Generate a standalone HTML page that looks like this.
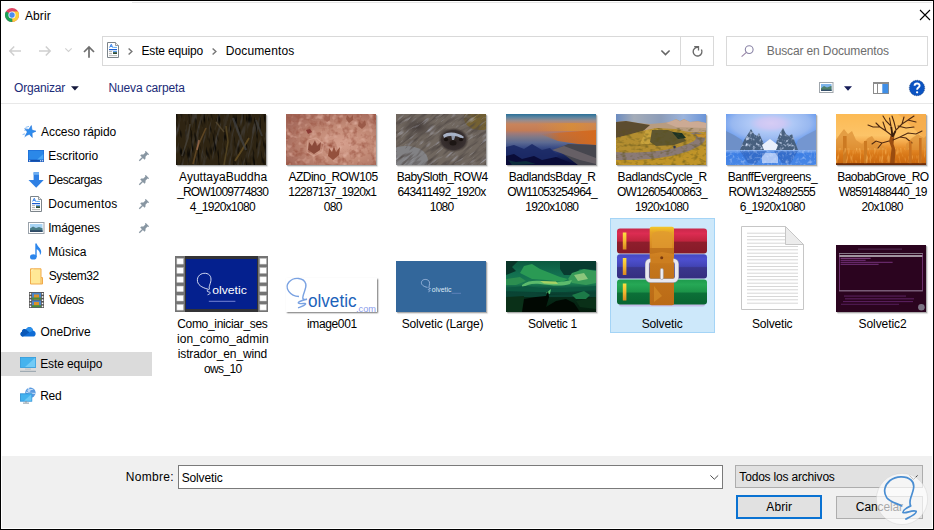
<!DOCTYPE html>
<html>
<head>
<meta charset="utf-8">
<title>Abrir</title>
<style>
*{box-sizing:border-box;margin:0;padding:0}
html,body{width:934px;height:530px;overflow:hidden;background:#fff}
body{font-family:"Liberation Sans",sans-serif;font-size:12px;color:#000;position:relative}
.a{position:absolute}
.t{position:absolute;white-space:nowrap;line-height:15px;font-size:12px}
svg{position:absolute;overflow:visible}
#frame{position:absolute;left:0;top:0;width:934px;height:530px;border:1px solid #000;z-index:50}
.th{position:absolute;width:90px;height:51px;box-shadow:1px 1px 1px rgba(0,0,0,.28),2px 2px 1px rgba(0,0,0,.07);overflow:hidden}
.th svg{left:0;top:0}
</style>
</head>
<body>
<div id="frame"></div>
<div class="a" style="left:132px;top:2px;width:800px;height:1px;background:#e6e6e6"></div>

<!-- chrome icon -->
<svg style="left:5px;top:8px" width="14" height="14" viewBox="-7 -7 14 14">
<circle r="7" fill="#e04663"/>
<path d="M0 0 L-6.06 -3.5 A7 7 0 0 0 0.6 6.97 Z" fill="#1a9f55"/>
<path d="M0 0 L0.6 6.97 A7 7 0 0 0 6.06 -3.5 L0 -3.5 Z" fill="#fbd03a"/>
<path d="M0 0 L-6.06 -3.5 L-3 0 Z" fill="#1a9f55"/>
<circle r="3.6" fill="#f4f4ff"/>
<circle r="2.7" fill="#4a8cf0"/>
</svg>
<!-- close X -->
<svg style="left:920px;top:10px" width="10" height="10" viewBox="0 0 10 10"><path d="M0 0L10 10M10 0L0 10" stroke="#000" stroke-width="1.1" fill="none"/></svg>

<!-- nav arrows -->
<svg style="left:9px;top:46px" width="12" height="10" viewBox="0 0 12 10"><path d="M12 5H1M5.2 0.5L0.8 5L5.2 9.5" stroke="#cfcfcf" stroke-width="1.5" fill="none"/></svg>
<svg style="left:39px;top:46px" width="12" height="10" viewBox="0 0 12 10"><path d="M0 5H11M6.8 0.5L11.2 5L6.8 9.5" stroke="#cfcfcf" stroke-width="1.5" fill="none"/></svg>
<svg style="left:65px;top:48px" width="7" height="4" viewBox="0 0 7 4"><path d="M0.3 0.4L3.5 3.4L6.7 0.4" stroke="#d0d0d0" stroke-width="1.1" fill="none"/></svg>
<svg style="left:83px;top:46px" width="12" height="12" viewBox="0 0 12 12"><path d="M6 11.7V1M1 6L6 0.9L11 6" stroke="#6e6e6e" stroke-width="1.7" fill="none"/></svg>

<!-- address bar -->
<div class="a" style="left:102px;top:36px;width:612px;height:30px;border:1px solid #d9d9d9"></div>
<div class="a" style="left:680px;top:36px;width:1px;height:30px;background:#d9d9d9"></div>
<!-- doc icon in address -->
<svg style="left:107px;top:42px" width="12" height="16" viewBox="0 0 12 16">
<path d="M0.5 0.5H8.5L11.5 3.5V15.5H0.5Z" fill="#fff" stroke="#7c848a" stroke-width="1"/>
<path d="M8.5 0.5V3.5H11.5" fill="#eee" stroke="#7c848a" stroke-width="0.8"/>
<path d="M2.6 5.6L4.3 2.2L5.6 5.6M3.2 4.4H5.2" stroke="#2a7ae8" stroke-width="0.9" fill="none"/>
<rect x="6.2" y="4.9" width="3.8" height="0.9" fill="#4aa4f0"/>
<rect x="2" y="7" width="8" height="1.2" fill="#1a5cd0"/>
<rect x="2" y="9.3" width="3" height="0.8" fill="#9a9a9a"/>
<rect x="6" y="9" width="4" height="1.2" fill="#5aa0f0"/>
<rect x="6" y="10.2" width="4" height="1.8" fill="#2c4c34"/>
<rect x="2" y="11.3" width="3" height="0.8" fill="#9a9a9a"/>
<rect x="2" y="13.3" width="8" height="0.8" fill="#a4a4a4"/>
</svg>
<svg style="left:128px;top:48px" width="5" height="7" viewBox="0 0 5 7"><path d="M0.6 0.4L3.9 3.5L0.6 6.6" stroke="#767676" stroke-width="1.4" fill="none"/></svg>
<svg style="left:212px;top:48px" width="5" height="7" viewBox="0 0 5 7"><path d="M0.6 0.4L3.9 3.5L0.6 6.6" stroke="#767676" stroke-width="1.4" fill="none"/></svg>
<svg style="left:660.5px;top:49.7px" width="9" height="5.5" viewBox="0 0 9 5.5"><path d="M0.4 0.5L4.5 4.6L8.6 0.5" stroke="#666" stroke-width="1.6" fill="none"/></svg>
<!-- refresh -->
<svg style="left:692px;top:46px" width="11.5" height="11" viewBox="0 0 11.5 11"><path d="M9.4 3.5A4.4 4.4 0 1 1 6.2 1.3" stroke="#6a6a6a" stroke-width="1.4" fill="none"/><path d="M2.2 0.6H6.5V4.4" stroke="#6a6a6a" stroke-width="1.3" fill="none"/></svg>

<!-- search -->
<div class="a" style="left:726px;top:36px;width:202px;height:30px;border:1px solid #d9d9d9"></div>
<svg style="left:740.5px;top:45px" width="13" height="12" viewBox="0 0 13 12"><circle cx="8.2" cy="4.6" r="3.9" stroke="#8a84a6" stroke-width="1.1" fill="none"/><path d="M5.4 7.4L0.6 11.6" stroke="#9a86a8" stroke-width="1.2"/></svg>

<!-- toolbar -->
<svg style="left:71px;top:86px" width="8" height="5" viewBox="0 0 8 5"><path d="M0 0.3H7.8L3.9 4.6Z" fill="#14183c"/></svg>
<div class="a" style="left:1px;top:103px;width:932px;height:1px;background:#e8e8e8"></div>
<!-- view icon -->
<svg style="left:818.5px;top:82px" width="14.5" height="11" viewBox="0 0 14.5 11">
<rect x="0.5" y="0.5" width="13.5" height="10" fill="#fff" stroke="#a0a6ac"/>
<rect x="2" y="2" width="10.5" height="7" fill="#7db4ea"/>
<path d="M2 6.2L5 4L8 5.5L12.5 3.8V9H2Z" fill="#4e7f6a"/>
<rect x="2" y="7.6" width="10.5" height="1.4" fill="#35506a"/>
</svg>
<svg style="left:843.5px;top:85.6px" width="8" height="5" viewBox="0 0 8 5"><path d="M0 0.2H8L4 4.8Z" fill="#161c58"/></svg>
<!-- pane icon -->
<svg style="left:873px;top:82px" width="16" height="12" viewBox="0 0 16 12">
<rect x="0.5" y="0.5" width="15" height="11" fill="#fff" stroke="#8c8c8c"/>
<rect x="0" y="0" width="16" height="2" fill="#8c8c8c"/>
<rect x="4" y="2" width="1" height="9.5" fill="#8c8c8c"/>
<rect x="9.3" y="2" width="5.9" height="9.2" fill="#3f8ee6"/>
</svg>
<!-- help -->
<svg style="left:909px;top:79.5px" width="16" height="16" viewBox="-8 -8 16 16"><circle r="7.7" fill="#0b53c2" stroke="#08306e" stroke-width="0.6" stroke-dasharray="1.2 0.8"/><path d="M-2.4 -2.2C-2.4 -5.2 2.6 -5.2 2.6 -2.3C2.6 -0.4 0.1 -0.4 0.1 1.7" stroke="#fff" stroke-width="1.9" fill="none"/><circle cx="0.1" cy="4.3" r="1.15" fill="#fff"/></svg>

<!-- sidebar -->
<div class="a" style="left:1px;top:352px;width:151px;height:24px;background:#dbdbdb"></div>
<!-- star -->
<svg style="left:22px;top:125px" width="14" height="13" viewBox="0 0 14 13">
<g transform="translate(-0.7 0.2) rotate(13 8.6 6.6)"><path d="M8.6 0.2L10.2 4.4L14.4 4.6L11 7.3L12.2 11.6L8.6 9.2L4.9 11.7L6.1 7.3L2.8 4.7L7 4.5Z" fill="#2d8cee" stroke="#1c6fd6" stroke-width="0.5"/></g>
<path d="M3.6 2.4L7 1.4M2.4 5.4L4.6 4.8M0.6 9.6L3 8.8M2.4 12L4.4 11" stroke="#7ab4f2" stroke-width="0.9" fill="none"/>
</svg>
<!-- desktop -->
<svg style="left:28px;top:150px" width="16" height="12" viewBox="0 0 16 12">
<rect x="0" y="0" width="16" height="12" fill="#1c6cd6"/>
<rect x="0.7" y="0.7" width="14.6" height="9" fill="#2b88e8"/>
<path d="M15.3 4V9.7H9Z" fill="#4ca8f4"/>
<rect x="0" y="9.7" width="16" height="2.3" fill="#1a5cc0"/>
<rect x="1" y="10.3" width="1.2" height="1" fill="#fff"/><rect x="12" y="10.3" width="1.2" height="1" fill="#fff"/><rect x="14" y="10.3" width="1.2" height="1" fill="#fff"/>
<rect x="2.6" y="10.5" width="9" height="0.6" fill="#0c3c8a"/>
</svg>
<!-- download -->
<svg style="left:28px;top:172px" width="16" height="16" viewBox="0 0 16 16">
<path d="M5.6 0.3H11V8H15.7L8.2 15.8L0.5 8H5.6Z" fill="#2f80e4"/>
<rect x="5.6" y="0.3" width="5.4" height="2.5" fill="#6fb0f2"/>
</svg>
<!-- documents -->
<svg style="left:30px;top:196px" width="12" height="16" viewBox="0 0 12 16">
<path d="M0.5 0.5H8.5L11.5 3.5V15.5H0.5Z" fill="#fff" stroke="#7c848a" stroke-width="1"/>
<path d="M8.5 0.5V3.5H11.5" fill="#eee" stroke="#7c848a" stroke-width="0.8"/>
<path d="M2.6 5.6L4.3 2.2L5.6 5.6M3.2 4.4H5.2" stroke="#2a7ae8" stroke-width="0.9" fill="none"/>
<rect x="6.2" y="4.9" width="3.8" height="0.9" fill="#4aa4f0"/>
<rect x="2" y="7" width="8" height="1.2" fill="#1a5cd0"/>
<rect x="2" y="9.3" width="3" height="0.8" fill="#9a9a9a"/>
<rect x="6" y="9" width="4" height="1.2" fill="#5aa0f0"/>
<rect x="6" y="10.2" width="4" height="1.8" fill="#2c4c34"/>
<rect x="2" y="11.3" width="3" height="0.8" fill="#9a9a9a"/>
<rect x="2" y="13.3" width="8" height="0.8" fill="#a4a4a4"/>
</svg>
<!-- images -->
<svg style="left:28px;top:222px" width="16.5" height="12" viewBox="0 0 16.5 12">
<rect x="0.5" y="0.5" width="15.5" height="11" fill="#fff" stroke="#9aa2aa"/>
<rect x="2" y="2" width="12.5" height="8" fill="#a8d4f4"/>
<path d="M2 6.5L5 4.6L8 6L11 5L14.5 6.2V10H2Z" fill="#4a7d86"/>
<rect x="2" y="8.2" width="12.5" height="1.8" fill="#2f4a66"/>
</svg>
<!-- music -->
<svg style="left:30px;top:243px" width="12" height="17" viewBox="0 0 12 17">
<ellipse cx="3.3" cy="13.9" rx="3.3" ry="2.7" fill="#2c86ec"/>
<path d="M5.3 0.4H6.7C7.2 3.4 11.2 5 11.2 8.8C11.2 10.4 10.6 11.4 9.8 12.2C10.4 9.4 9 7.4 6.7 6.2V14H5.3Z" fill="#2c86ec"/>
</svg>
<!-- folder -->
<svg style="left:29.7px;top:267.5px" width="13" height="16.5" viewBox="0 0 13 16.5">
<path d="M0.5 0.8H11V9.6H12.5V16H0.5Z" fill="#ffe896" stroke="#f0aa4c" stroke-width="1"/>
<path d="M11 9.6V16" stroke="#f0aa4c" stroke-width="0.9"/>
<path d="M0.9 3.2L3.4 1.2" stroke="#fff4c8" stroke-width="0.8"/>
</svg>
<!-- videos -->
<svg style="left:28.5px;top:292px" width="15" height="16" viewBox="0 0 15 16">
<rect x="0" y="0" width="15" height="16" fill="#555"/>
<rect x="3" y="0.8" width="9" height="6.7" fill="#4a84c8"/>
<rect x="3" y="8.5" width="9" height="6.7" fill="#4a84c8"/>
<rect x="5" y="2.5" width="5" height="5" fill="#d8902a"/>
<rect x="3" y="5.5" width="9" height="2" fill="#4a8a3a"/>
<rect x="5" y="10" width="5" height="5" fill="#d8902a"/>
<rect x="3" y="13.2" width="9" height="2" fill="#4a8a3a"/>
<g fill="#fff"><rect x="0.7" y="1" width="1.5" height="1.6"/><rect x="0.7" y="4.2" width="1.5" height="1.6"/><rect x="0.7" y="7.4" width="1.5" height="1.6"/><rect x="0.7" y="10.6" width="1.5" height="1.6"/><rect x="0.7" y="13.6" width="1.5" height="1.6"/>
<rect x="12.8" y="1" width="1.5" height="1.6"/><rect x="12.8" y="4.2" width="1.5" height="1.6"/><rect x="12.8" y="7.4" width="1.5" height="1.6"/><rect x="12.8" y="10.6" width="1.5" height="1.6"/><rect x="12.8" y="13.6" width="1.5" height="1.6"/></g>
</svg>
<!-- onedrive -->
<svg style="left:20px;top:326px" width="16" height="11" viewBox="0 0 16 11">
<path d="M3.2 10.6C0.6 10.6 -0.6 7.2 2 5.8C1.8 3.4 4.6 2.2 6 3.6C7.4 -0.4 12.6 0.4 13 4.4C16.6 4.8 16.6 10.6 13 10.6Z" fill="#0f6cd6"/>
<path d="M6 3.6C7.4 -0.4 12.6 0.4 13 4.4L7 8Z" fill="#2a8fea"/>
<path d="M2 5.8C1.8 3.4 4.6 2.2 6 3.6L9.6 6.4L3 10.6C0.6 10.6 -0.6 7.2 2 5.8Z" fill="#0a58b8"/>
</svg>
<!-- this pc -->
<svg style="left:20px;top:357px" width="16" height="15" viewBox="0 0 16 15">
<rect x="0.4" y="0.4" width="15.2" height="10" fill="#45b3ee" stroke="#2e9adc" stroke-width="0.8"/>
<path d="M15.2 0.8V10H5Z" fill="#72cbf6"/>
<rect x="5" y="11.6" width="6" height="1" fill="#b8bec4"/>
<rect x="0" y="13.8" width="16" height="1.1" fill="#9aa6ae"/>
</svg>
<!-- network -->
<svg style="left:20px;top:387px" width="16" height="17" viewBox="0 0 16 17">
<circle cx="10.4" cy="5.6" r="5.2" fill="#5a9ae0"/>
<path d="M8 1.2C10 3 12 3 13.5 1.8M6 5C9 7 12 6 15.4 6.4" stroke="#cfe4fa" stroke-width="1" fill="none"/>
<circle cx="9" cy="3.6" r="1.6" fill="#bcd8f6"/>
<rect x="0.4" y="6.8" width="11.4" height="7.4" fill="#43b2ee" stroke="#2a8ed4" stroke-width="0.8"/>
<path d="M11.4 7.2V13.8H4Z" fill="#6cc8f6"/>
<rect x="5.3" y="14.2" width="1.4" height="1.4" fill="#8a98a4"/>
<rect x="3" y="15.6" width="6" height="1" fill="#8a98a4"/>
</svg>
<!-- pins -->
<svg style="left:139px;top:151px" width="10" height="10" viewBox="0 0 10 10"><use href="#pin"/></svg>
<svg width="0" height="0" style="left:0;top:0"><defs><g id="pin"><path d="M0.3 9.7L3.8 6.2" stroke="#8896a2" stroke-width="1.3"/><path d="M1.2 4.4L2.2 3.6L4.4 3.4L6.4 1.4L6 0.4L6.8 0L10 3.2L9.6 4L8.6 3.6L6.6 5.6L6.4 7.8L5.6 8.8Z" fill="#8896a2"/></g></defs></svg>
<svg style="left:139px;top:175px" width="10" height="10" viewBox="0 0 10 10"><use href="#pin"/></svg>
<svg style="left:139px;top:199px" width="10" height="10" viewBox="0 0 10 10"><use href="#pin"/></svg>
<svg style="left:139px;top:223px" width="10" height="10" viewBox="0 0 10 10"><use href="#pin"/></svg>

<!-- row 1 thumbnails -->
<div class="th" style="left:176px;top:114px;background:#2e2412">
<svg width="90" height="51" viewBox="0 0 90 51">
<defs><filter id="n1" color-interpolation-filters="sRGB" x="0" y="0" width="100%" height="100%"><feTurbulence type="fractalNoise" baseFrequency="0.35 0.05" numOctaves="2" seed="3"/><feColorMatrix values="0 0 0 0 0.27  0 0 0 0 0.26  0 0 0 0 0.25  0 0 0 3 -1.55"/></filter>
<filter id="n1b" color-interpolation-filters="sRGB" x="0" y="0" width="100%" height="100%"><feTurbulence type="fractalNoise" baseFrequency="0.4 0.07" numOctaves="2" seed="11"/><feColorMatrix values="0 0 0 0 0  0 0 0 0 0  0 0 0 0 0  0 0 0 3.4 -1.85"/></filter></defs>
<rect width="90" height="51" fill="#2e2412"/>
<g transform="rotate(12 45 25)"><rect x="-20" y="-20" width="130" height="91" filter="url(#n1)"/></g>
<g transform="rotate(-6 45 25)"><rect x="-20" y="-20" width="130" height="91" filter="url(#n1b)"/></g>
<path d="M17 50L21 34L30 14" stroke="#6e5028" stroke-width="1.6" fill="none" opacity=".75"/>
<path d="M21 36L23 26" stroke="#a87458" stroke-width="1.6" fill="none" opacity=".7"/>
<path d="M59 47L66 36L73 24" stroke="#6a5226" stroke-width="1.8" fill="none" opacity=".8"/>
<path d="M48 51L52 28L50 12" stroke="#5a4a26" stroke-width="1.6" fill="none" opacity=".8"/>
<path d="M40 8L48 18" stroke="#5e5034" stroke-width="1.4" fill="none" opacity=".7"/>
<path d="M57 4L63 20L70 36" stroke="#444444" stroke-width="2.2" fill="none" opacity=".75"/>
<path d="M80 6L86 22" stroke="#404040" stroke-width="2" fill="none" opacity=".7"/>
<path d="M6 42L12 24L14 10" stroke="#4a463e" stroke-width="1.6" fill="none" opacity=".7"/>
</svg></div>

<div class="th" style="left:286px;top:114px;background:#b67c68">
<svg width="90" height="51" viewBox="0 0 90 51">
<defs><radialGradient id="g2" cx="0.62" cy="0.58" r="0.7"><stop offset="0" stop-color="#d6a08e"/><stop offset="0.5" stop-color="#c28a76"/><stop offset="1" stop-color="#a4685a"/></radialGradient>
<filter id="n2" color-interpolation-filters="sRGB" x="0" y="0" width="100%" height="100%"><feTurbulence type="fractalNoise" baseFrequency="0.14" numOctaves="3" seed="8"/><feColorMatrix values="0 0 0 0 0.6  0 0 0 0 0.32  0 0 0 0 0.25  0 0 0 2.2 -1.05"/></filter>
<filter id="n2b" color-interpolation-filters="sRGB" x="0" y="0" width="100%" height="100%"><feTurbulence type="fractalNoise" baseFrequency="0.16" numOctaves="2" seed="21"/><feColorMatrix values="0 0 0 0 0.9  0 0 0 0 0.72  0 0 0 0 0.66  0 0 0 2.2 -1.2"/></filter></defs>
<rect width="90" height="51" fill="url(#g2)"/>
<rect width="90" height="51" filter="url(#n2)"/>
<rect width="90" height="51" filter="url(#n2b)"/>
<path d="M22 36L23 28L26 32L29 26L31 32L35 28L34 36L28 40Z" fill="#8a4a3a"/>
<path d="M22 26L30 24L38 30L36 38L28 42L21 38Z" fill="none" stroke="#e0b0a0" stroke-width="1.2" opacity=".5"/>
<path d="M42 42L43 34L46 38L48 32L50 38L54 33L53 41L47 46Z" fill="#94503c"/>
<path d="M72 12L73 7L76 10L79 6L80 11L76 15Z" fill="#9a5a48"/>
<path d="M60 5L61 1L64 4L67 1L67 6L63 9Z" fill="#9a5a48"/>
<path d="M38 5L39 1L42 3L44 1L44 6L41 8Z" fill="#a46454"/>
<path d="M20 16L24 15L26 18L22 20Z" fill="#8a3a34"/>
</svg></div>

<div class="th" style="left:396px;top:114px;background:#70675f">
<svg width="90" height="51" viewBox="0 0 90 51">
<defs><filter id="n3" color-interpolation-filters="sRGB" x="0" y="0" width="100%" height="100%"><feTurbulence type="fractalNoise" baseFrequency="0.07 0.35" numOctaves="2" seed="5"/><feColorMatrix values="0 0 0 0 0.3  0 0 0 0 0.27  0 0 0 0 0.26  0 0 0 2.4 -1.1"/></filter>
<filter id="n3b" color-interpolation-filters="sRGB" x="0" y="0" width="100%" height="100%"><feTurbulence type="fractalNoise" baseFrequency="0.08 0.4" numOctaves="2" seed="9"/><feColorMatrix values="0 0 0 0 0.66  0 0 0 0 0.66  0 0 0 0 0.7  0 0 0 2.4 -1.35"/></filter>
<radialGradient id="g3" cx="0.5" cy="0.5" r="0.5"><stop offset="0" stop-color="#2a2220"/><stop offset="0.8" stop-color="#383030"/><stop offset="1" stop-color="#4a423c" stop-opacity="0.2"/></radialGradient>
<radialGradient id="g3b" cx="0.5" cy="0.5" r="0.5"><stop offset="0" stop-color="#3e3634" stop-opacity=".9"/><stop offset="1" stop-color="#4a4240" stop-opacity="0"/></radialGradient></defs>
<rect width="90" height="51" fill="#70675f"/>
<ellipse cx="84" cy="4" rx="16" ry="12" fill="#74602e" opacity=".9"/>
<ellipse cx="10" cy="46" rx="22" ry="14" fill="#8e949e" opacity=".6"/>
<ellipse cx="22" cy="13" rx="18" ry="11" fill="url(#g3b)"/>
<g transform="rotate(-38 45 25)"><rect x="-20" y="-30" width="130" height="110" filter="url(#n3)"/><rect x="-20" y="-30" width="130" height="110" filter="url(#n3b)"/></g>
<ellipse cx="57.5" cy="26" rx="15" ry="12" fill="url(#g3)"/>
<path d="M47 21C52 17 62 18 68 23L66 25C61 21 53 21 48 24Z" fill="#b4c0d6" opacity=".9"/>
<path d="M55 20L60 20L58 26L56 26Z" fill="#a8b4cc" opacity=".8"/>
<ellipse cx="57" cy="29" rx="3.5" ry="2.5" fill="#1c1614"/>
<ellipse cx="50" cy="25.5" rx="2.2" ry="1.8" fill="#181210"/><ellipse cx="65" cy="25.5" rx="2.2" ry="1.8" fill="#181210"/>
</svg></div>

<div class="th" style="left:506px;top:114px;background:#5a5a78">
<svg width="90" height="51" viewBox="0 0 90 51">
<defs><linearGradient id="g4" x1="0" y1="0" x2="0" y2="1">
<stop offset="0" stop-color="#2a7098"/><stop offset="0.06" stop-color="#5a84a0"/><stop offset="0.13" stop-color="#9a8c8c"/><stop offset="0.2" stop-color="#c8845c"/><stop offset="0.32" stop-color="#c47c54"/><stop offset="0.38" stop-color="#a07a78"/><stop offset="0.46" stop-color="#7c7888"/><stop offset="0.56" stop-color="#5c6a92"/><stop offset="0.66" stop-color="#3a4c86"/><stop offset="0.78" stop-color="#1e2c68"/><stop offset="0.9" stop-color="#101848"/><stop offset="1" stop-color="#0a0c34"/></linearGradient>
<linearGradient id="g4b" x1="0" y1="0" x2="1" y2="0"><stop offset="0" stop-color="#d46a1e" stop-opacity="0"/><stop offset="0.35" stop-color="#d46a1e" stop-opacity=".75"/><stop offset="1" stop-color="#d46a1e" stop-opacity="1"/></linearGradient>
<linearGradient id="g4c" x1="0" y1="0" x2="1" y2="0"><stop offset="0" stop-color="#dc9030" stop-opacity="0"/><stop offset="0.6" stop-color="#dc9030" stop-opacity=".7"/><stop offset="1" stop-color="#d88a40" stop-opacity=".5"/></linearGradient></defs>
<rect width="90" height="51" fill="url(#g4)"/>
<rect x="30" y="9" width="60" height="8" fill="url(#g4c)"/>
<path d="M34 20L90 16V31L72 30L52 27Z" fill="url(#g4b)"/>
<path d="M50 35L62 30L90 31V51H72L60 42Z" fill="#46464e"/>
<path d="M46 36L58 32L90 44V50L74 46Z" fill="#6c646a" opacity=".85"/>
<path d="M0 33L8 31L18 35L26 30L36 36L44 34L52 42L44 51H0Z" fill="#1c2a66" opacity=".9"/>
<path d="M0 42L8 40L16 45L28 42L36 46L50 43L60 47L70 51H0Z" fill="#0a0c38"/>
<path d="M2 46L10 48L20 47L30 50L6 51Z" fill="#0c2c3c"/>
</svg></div>

<div class="th" style="left:616px;top:114px;background:#a08c50">
<svg width="90" height="51" viewBox="0 0 90 51">
<defs><linearGradient id="g5" x1="0" y1="0" x2="1" y2="0"><stop offset="0" stop-color="#6c8cc0"/><stop offset="0.2" stop-color="#a4acb8"/><stop offset="0.5" stop-color="#8c9cb8"/><stop offset="0.75" stop-color="#9cb4dc"/><stop offset="1" stop-color="#6a94d8"/></linearGradient>
<filter id="n5" color-interpolation-filters="sRGB" x="0" y="0" width="100%" height="100%"><feTurbulence type="fractalNoise" baseFrequency="0.18 0.3" numOctaves="2" seed="4"/><feColorMatrix values="0 0 0 0 0.36  0 0 0 0 0.32  0 0 0 0 0.1  0 0 0 2.2 -1.05"/></filter></defs>
<rect width="90" height="51" fill="#b8922e"/>
<rect width="90" height="11" fill="url(#g5)"/>
<path d="M0 8L10 7L22 9L34 10L46 9L54 8L60 5L64 7L68 5L74 8L82 7L90 9V18H0Z" fill="#b89c80"/>
<path d="M50 9L60 5.5L64 7.5L68 5.5L74 8L82 7.5L90 9V14L60 13Z" fill="#ccaa94"/>
<path d="M0 8L10 7L22 9L34 11L26 18L0 24Z" fill="#5c4c30"/>
<path d="M0 24L26 17L40 14L60 15L76 19L80 24L60 34L30 38L0 38Z" fill="#b48e30"/>
<path d="M24 30L30 16L42 15L40 30Z" fill="#c8a23c"/>
<path d="M36 16L52 16L66 21L70 27L58 31L40 32L34 28Z" fill="#5e5630"/>
<path d="M56 18L66 19L70 24L62 25Z" fill="#1c3224"/>
<path d="M0 38C30 40 62 36 78 27C82 24 80 21 74 19L80 18C90 20 92 24 86 30C70 42 34 47 0 46Z" fill="#8a7a76"/>
<path d="M78 20L90 20V24L82 23Z" fill="#c8902c"/>
<path d="M0 46C34 47 64 44 90 32V51H0Z" fill="#c09428"/>
<rect y="14" width="90" height="37" filter="url(#n5)" opacity=".8"/>
<circle cx="58.5" cy="33" r="1.2" fill="#2a3458"/>
</svg></div>

<div class="th" style="left:726px;top:114px;background:#7aa8ec">
<svg width="90" height="51" viewBox="0 0 90 51">
<defs><radialGradient id="g6" cx="0.5" cy="0.25" r="0.62"><stop offset="0" stop-color="#d6ccf4"/><stop offset="0.22" stop-color="#ccc8f4"/><stop offset="0.4" stop-color="#aec8f6"/><stop offset="0.7" stop-color="#98b8f0"/><stop offset="1" stop-color="#5690ee"/></radialGradient>
<linearGradient id="g6b" x1="0" y1="0" x2="0" y2="1"><stop offset="0" stop-color="#8ab2f0"/><stop offset="0.25" stop-color="#3c7ee4"/><stop offset="1" stop-color="#4a88e6"/></linearGradient>
<filter id="n6" color-interpolation-filters="sRGB" x="0" y="0" width="100%" height="100%"><feTurbulence type="fractalNoise" baseFrequency="0.3" numOctaves="2" seed="7"/><feColorMatrix values="0 0 0 0 0.85  0 0 0 0 0.9  0 0 0 0 1  0 0 0 2.6 -1.3"/></filter>
<clipPath id="c6"><path d="M14 36L18 26L22 20L25 15L28 20L31 22L33 19L37 28L41 36ZM48 36L51 26L54 19L57 14L60 20L63 22L66 20L69 28L72 36Z"/></clipPath></defs>
<rect width="90" height="37" fill="url(#g6)"/>
<path d="M0 17L8 21L16 26L20 37H0Z" fill="#6e90c8"/>
<path d="M90 16L80 21L72 26L68 37H90Z" fill="#7496d0"/>
<path d="M14 36L18 26L22 20L25 15L28 20L31 22L33 19L37 28L41 36Z" fill="#48607e"/>
<path d="M48 36L51 26L54 19L57 14L60 20L63 22L66 20L69 28L72 36Z" fill="#48607e"/>
<g clip-path="url(#c6)"><rect width="90" height="51" filter="url(#n6)"/></g>
<path d="M36 31L44 25L52 31L50 36H38Z" fill="#eaf0fc"/>
<rect y="36" width="90" height="15" fill="url(#g6b)"/>
<rect x="36" y="39" width="16" height="10" fill="#c0d2f8" opacity=".85"/>
<path d="M14 37L22 49L30 50L41 37Z" fill="#2c5cb4" opacity=".55"/><path d="M48 37L56 49L64 50L72 37Z" fill="#2c5cb4" opacity=".55"/>
<rect y="36" width="90" height="15" filter="url(#n6)" opacity=".5"/>
</svg></div>

<div class="th" style="left:836px;top:114px;background:#e8a040">
<svg width="90" height="51" viewBox="0 0 90 51">
<defs><linearGradient id="g7" x1="0" y1="0" x2="0" y2="1"><stop offset="0" stop-color="#fcba54"/><stop offset="0.42" stop-color="#fcc468"/><stop offset="0.55" stop-color="#f4aa4c"/><stop offset="0.68" stop-color="#e48a28"/><stop offset="0.8" stop-color="#d87818"/><stop offset="0.95" stop-color="#cc6a10"/><stop offset="1" stop-color="#7a3408"/></linearGradient>
<filter id="n7" color-interpolation-filters="sRGB" x="0" y="0" width="100%" height="100%"><feTurbulence type="fractalNoise" baseFrequency="0.5 0.12" numOctaves="2" seed="2"/><feColorMatrix values="0 0 0 0 0.98  0 0 0 0 0.72  0 0 0 0 0.36  0 0 0 2.6 -1.3"/></filter></defs>
<rect width="90" height="51" fill="url(#g7)"/>
<path d="M62 0L90 0V26Z" fill="#f4a84a" opacity=".75"/>
<path d="M0 26L4 20L8 15L12 20L16 17L20 26L26 30L32 24L36 22L40 28L48 32L50 36L0 36Z" fill="#dc9238" opacity=".75"/>
<path d="M70 30L76 24L82 20L88 24L90 22V36H70Z" fill="#dc9238" opacity=".7"/>
<rect x="7" y="22" width="3.6" height="28" fill="#cc7a22"/><rect x="28" y="27" width="3" height="23" fill="#cc7a22"/>
<rect y="34" width="90" height="15" filter="url(#n7)" opacity=".75"/>
<path d="M54 50L55.5 34L53 27L55 20L57 24L58.5 20L57.5 30L59.5 36L58.5 50Z" fill="#9a4c10"/>
<path d="M56.5 22L55 12L53.5 4M56.5 22L60 16L66 10M60 16L58 8L56 2M56.5 22L50 17L44 13L40 9M50 17L47 8M44 13L37 13L32 11M55 12L50 7L47 2M57 26L64 23L70 24L76 29M66 10L72 6L80 8M66 10L68 3M72 6L78 2M53 27L46 29L40 27L36 30M46 29L42 34M64 23L72 19L80 20L86 17M62 12L70 14L78 13" stroke="#4e2810" stroke-width="1.1" fill="none" stroke-linecap="round"/>
<path d="M56.5 23L55.3 13M56.5 23L59.5 17" stroke="#3a1e0c" stroke-width="1.8" fill="none"/>
<rect x="73" y="27" width="2.6" height="23" fill="#c87220"/><rect x="83" y="24" width="2.6" height="26" fill="#c87220"/>
<rect y="49.3" width="90" height="1.7" fill="#6a2c08"/>
</svg></div>

<!-- row 2 -->
<!-- selection -->
<div class="a" style="left:610px;top:218px;width:105px;height:115px;background:#cde8fa;border:1px solid #a4d4f6"></div>

<!-- video thumb -->
<svg style="left:175px;top:256px" width="93" height="56" viewBox="0 0 93 56">
<rect width="93" height="56" fill="#747474"/>
<rect x="10" y="0" width="73" height="56" fill="#333336"/>
<rect x="11" y="3" width="71" height="50" fill="#04208e"/>
<g fill="#fff" stroke="#c8c8c8" stroke-width="0.5"><rect x="1.9" y="2.5" width="6.4" height="5.6"/><rect x="1.9" y="11.7" width="6.4" height="5.6"/><rect x="1.9" y="20.8" width="6.4" height="5.6"/><rect x="1.9" y="30.1" width="6.4" height="5.6"/><rect x="1.9" y="39.4" width="6.4" height="5.6"/><rect x="1.9" y="48.5" width="6.4" height="5.6"/><rect x="84.9" y="2.5" width="6.4" height="5.6"/><rect x="84.9" y="11.7" width="6.4" height="5.6"/><rect x="84.9" y="20.8" width="6.4" height="5.6"/><rect x="84.9" y="30.1" width="6.4" height="5.6"/><rect x="84.9" y="39.4" width="6.4" height="5.6"/><rect x="84.9" y="48.5" width="6.4" height="5.6"/></g>
<path d="M33 33.2C27 31.5 22 29 22.4 23.5C22.8 18.5 28 16.4 32 17.6C36.4 19 36.6 23.5 35.2 27.5C34.4 30 33.8 31.6 34.4 33.2C32 34 31.4 35.4 33.2 35.8C36 36.2 36.4 37.4 32.6 38.8" stroke="#e8ecfa" stroke-width="0.9" fill="none"/>
<text x="37.2" y="37.7" font-family="Liberation Sans, sans-serif" font-size="10.2" fill="#fff" textLength="34.6" lengthAdjust="spacingAndGlyphs">olvetic</text>
<rect x="33.8" y="44.8" width="26.6" height="1" fill="#7482d4"/>
</svg>

<!-- image001 -->
<div class="a" style="left:286px;top:278px;width:90.5px;height:34px;background:#fff;box-shadow:1px 1px 1.5px rgba(0,0,0,.55)"></div>
<svg style="left:286px;top:278px" width="91" height="34" viewBox="0 0 91 34">
<path d="M13 18.5C4 18 -2 10 3 4C8 -1.5 18 -0.5 19.8 6C20.8 10 17.5 14 16.8 19.5C16.6 21 17.5 21.8 21 21.3C15 22.5 10.5 24.6 13 25.4C16 26.2 20.5 24.5 19.5 26.2C18.5 28 15 28.8 12 29.8" stroke="#7aa2e2" stroke-width="1.4" fill="none"/>
<text x="22" y="28.7" font-family="Liberation Sans, sans-serif" font-size="17.5" fill="#1c62ba" textLength="48.5" lengthAdjust="spacingAndGlyphs">olvetic</text>
<text x="70" y="33.6" font-family="Liberation Sans, sans-serif" font-size="9" fill="#8a9cec" textLength="20" lengthAdjust="spacingAndGlyphs">.com</text>
</svg>

<!-- Solvetic (Large) -->
<div class="th" style="left:396px;top:261px;background:#33679b">
<svg width="90" height="51" viewBox="0 0 90 51">
<path d="M31.5 26.4C27.5 25.6 24.6 23.6 25.6 20.6C26.6 18 30.6 17.8 32.6 19.6C34.2 21.2 33.4 23.6 33 26C32.8 27.2 33.4 27.6 34.6 27.6C32.2 28 31.6 28.8 33 29C34.6 29.2 34.4 30.2 32.4 30.8" stroke="#a8c0e4" stroke-width="0.8" fill="none"/>
<text x="35.8" y="30.6" font-family="Liberation Sans, sans-serif" font-size="7.2" fill="#dfe8f6" textLength="19.6" lengthAdjust="spacingAndGlyphs">olvetic</text>
<rect x="55.6" y="31.8" width="9.4" height="1" fill="#5c80b8"/>
</svg></div>

<!-- Solvetic 1 aurora -->
<div class="th" style="left:506px;top:261px;background:#0c3a1c">
<svg width="90" height="51" viewBox="0 0 90 51">
<defs><linearGradient id="g8" x1="0" y1="0" x2="0" y2="1"><stop offset="0" stop-color="#0c5a40"/><stop offset="0.25" stop-color="#127050"/><stop offset="0.45" stop-color="#1a7c50"/><stop offset="0.55" stop-color="#0c5040"/><stop offset="0.66" stop-color="#083c2c"/><stop offset="0.72" stop-color="#062a18"/><stop offset="1" stop-color="#041c0c"/></linearGradient></defs>
<rect width="90" height="51" fill="url(#g8)"/>
<path d="M0 0H12L6 6L10 10L0 14Z" fill="#083428"/>
<path d="M54 0H90V9L74 8L68 14L58 14L54 8Z" fill="#083c30"/>
<path d="M18 5L26 3L34 8L44 12L54 16L62 18L56 21L40 19L26 18L14 12Z" fill="#2a9a54"/>
<path d="M0 18L14 16L20 20L10 24L0 24Z" fill="#2c8e50"/>
<path d="M66 12L78 8L90 10V22L80 24L66 22L62 18Z" fill="#369a58"/>
<path d="M68 14L78 12L82 18L72 20Z" fill="#8cc67c"/>
<path d="M16 24C24 18 34 20 44 21C52 22 60 20 66 19L64 23C54 26 44 24 34 23C26 22 20 24 16 27Z" fill="#5cba6c"/>
<path d="M34 20L50 20.5L52 23L38 22.5Z" fill="#a8d264"/>
<path d="M0 27L20 25L40 28L60 27L90 25V29L60 31L30 31L0 30Z" fill="#0c5840"/>
<path d="M0 32H30L44 34L90 32V36H0Z" fill="#0a4434"/>
<path d="M40 32L45 28L44 33Z" fill="#58c474"/>
<path d="M66 34L78 30L84 34L80 38L70 38Z" fill="#1c7a48"/>
<path d="M0 36L18 35V51H0Z" fill="#0a3018"/>
<path d="M70 40L90 36V48L74 46Z" fill="#0a3018"/>
<path d="M16 51L18 38L30 36L40 35L42 30L43 36L40 46L50 40L60 38L68 42L74 51Z" fill="#010802"/>
</svg></div>

<!-- winrar -->
<svg style="left:616px;top:226px" width="92" height="82" viewBox="0 0 92 82">
<defs>
<linearGradient id="rr" x1="0" y1="0" x2="0" y2="1"><stop offset="0" stop-color="#c8284a"/><stop offset="0.2" stop-color="#dc2c52"/><stop offset="0.5" stop-color="#c0243e"/><stop offset="0.55" stop-color="#8e1e2c"/><stop offset="1" stop-color="#861a28"/></linearGradient>
<linearGradient id="rb" x1="0" y1="0" x2="0" y2="1"><stop offset="0" stop-color="#4648c0"/><stop offset="0.2" stop-color="#4e50d0"/><stop offset="0.5" stop-color="#4244b4"/><stop offset="0.55" stop-color="#3a368c"/><stop offset="1" stop-color="#342e80"/></linearGradient>
<linearGradient id="rg" x1="0" y1="0" x2="0" y2="1"><stop offset="0" stop-color="#1e9a4c"/><stop offset="0.2" stop-color="#26a856"/><stop offset="0.5" stop-color="#1c9448"/><stop offset="0.55" stop-color="#0c7038"/><stop offset="1" stop-color="#086430"/></linearGradient>
<linearGradient id="ry" x1="0" y1="0" x2="0" y2="1"><stop offset="0" stop-color="#fce040"/><stop offset="0.5" stop-color="#f4b830"/><stop offset="1" stop-color="#d88820"/></linearGradient>
<linearGradient id="belt" x1="0" y1="0" x2="0" y2="1"><stop offset="0" stop-color="#f4c828"/><stop offset="0.07" stop-color="#e6a428"/><stop offset="0.28" stop-color="#d48624"/><stop offset="0.5" stop-color="#c4761c"/><stop offset="1" stop-color="#ba6a16"/></linearGradient>
</defs>
<rect x="3" y="76.5" width="86" height="4" rx="2" fill="#c4bce8"/>
<rect x="1" y="2.5" width="90" height="25" rx="3" fill="url(#rr)"/>
<rect x="1" y="28.2" width="90" height="24.4" rx="3" fill="url(#rb)"/>
<rect x="1" y="53.4" width="90" height="25" rx="3" fill="url(#rg)"/>
<rect x="6.8" y="6.5" width="3.6" height="17" fill="url(#ry)"/>
<rect x="6.8" y="32" width="3.6" height="17" fill="url(#ry)"/>
<rect x="6.8" y="57.5" width="3.6" height="17" fill="url(#ry)"/>
<rect x="33.7" y="0.8" width="24.3" height="78.5" rx="2" fill="url(#belt)"/>
<path d="M36 8C40 4 52 4 56 8V22H36Z" fill="#e09a30" opacity=".7"/>
<path d="M34 22H58V28L46 26L34 28Z" fill="#b86a18" opacity=".6"/>
<rect x="31.2" y="34.4" width="29.5" height="20.2" rx="3.5" fill="none" stroke="#9c9ca8" stroke-width="4.4"/>
<rect x="31.2" y="34.4" width="29.5" height="20.2" rx="3.5" fill="none" stroke="#e8e8f0" stroke-width="3.4"/>
<rect x="34.4" y="31.8" width="23" height="5.4" fill="#cc7e20"/>
<circle cx="45.7" cy="31.8" r="1.5" fill="#7a3a10"/>
<rect x="44.3" y="42.5" width="3" height="11" rx="1.4" fill="#f0f0f6" stroke="#9a9aa6" stroke-width="0.6"/>
<path d="M38 60L46 70L38 76Z" fill="#d8922c" opacity=".6"/>
</svg>

<!-- document icon -->
<svg style="left:741px;top:226px" width="63" height="84" viewBox="0 0 63 84">
<path d="M0.5 0.5H44.5L62.5 18.5V83.5H0.5Z" fill="#fff" stroke="#c6c6c6" stroke-width="1"/>
<path d="M44.5 0.5V18.5H62.5Z" fill="#ececec" stroke="#c6c6c6" stroke-width="1"/>
<g stroke="#d2d2d2" stroke-width="0.9">
<path d="M6 7.2H44"/><path d="M6 10.5H44"/><path d="M6 13.8H44"/><path d="M6 17.2H44"/>
<path d="M6 20.5H57"/><path d="M6 23.8H57"/><path d="M6 27.2H57"/><path d="M6 30.5H57"/><path d="M6 33.8H57"/><path d="M6 37.2H57"/><path d="M6 40.5H57"/><path d="M6 43.8H57"/><path d="M6 47.2H57"/><path d="M6 50.5H57"/><path d="M6 53.8H57"/><path d="M6 57.2H57"/><path d="M6 60.5H57"/><path d="M6 63.8H57"/><path d="M6 67.2H57"/><path d="M6 70.5H57"/><path d="M6 73.8H57"/><path d="M6 77.2H57"/>
</g>
</svg>

<!-- Solvetic2 -->
<div class="th" style="left:836px;top:245px;height:67px;background:#2b041f">
<svg width="90" height="67" viewBox="0 0 90 67">
<rect x="22" y="3.6" width="44" height="1" fill="#553057"/>
<rect x="3.4" y="8.4" width="83" height="37.4" fill="none" stroke="#7c3c80" stroke-width="0.8"/>
<rect x="3" y="8" width="83.8" height="0.9" fill="#8a808a"/>
<rect x="3" y="45.4" width="83.8" height="0.9" fill="#8a808a"/>
<rect x="3.4" y="10.2" width="83" height="1.6" fill="#bdb9bd"/>
<rect x="4.6" y="12.8" width="30" height="1" fill="#8a4a8c"/>
<rect x="4.6" y="14.8" width="25" height="1" fill="#74327a"/>
<rect x="4.6" y="16.8" width="52" height="1" fill="#74327a"/>
<rect x="4.6" y="18.8" width="38" height="1" fill="#74327a"/>
<rect x="8" y="50.6" width="62" height="0.9" fill="#62266a"/>
<rect x="9" y="53.4" width="69" height="0.9" fill="#62266a"/>
<rect x="7" y="56.2" width="70" height="0.9" fill="#62266a"/>
<rect x="5" y="58.8" width="58" height="0.9" fill="#5a2262"/>
<circle cx="85.4" cy="62.2" r="3.3" fill="#7c7484"/>
</svg></div>

<!-- bottom panel -->
<div class="a" style="left:1px;top:456px;width:932px;height:73px;background:#f0f0f0;border:1px solid #fff;border-top:none"></div>
<div class="a" style="left:178px;top:465px;width:545px;height:24px;background:#fff;border:1px solid #7a7a7a"></div>
<svg style="left:709.6px;top:475.1px" width="8.6" height="4.8" viewBox="0 0 9 5"><path d="M0.4 0.4L4.5 4.4L8.6 0.4" stroke="#444" stroke-width="1" fill="none"/></svg>
<div class="a" style="left:735px;top:465px;width:188px;height:23px;background:#e1e1e1;border:1px solid #adadad"></div>
<svg style="left:908.5px;top:474.5px" width="9" height="5" viewBox="0 0 9 5"><path d="M0.4 0.4L4.5 4.4L8.6 0.4" stroke="#444" stroke-width="1" fill="none"/></svg>
<div class="a" style="left:736px;top:495px;width:86px;height:24px;background:#e1e1e1;border:2px solid #0a72d2"></div>
<div class="a" style="left:836px;top:495.5px;width:86.5px;height:23px;background:#e1e1e1;border:1px solid #adadad"></div>
<div class="t" style="left:25.00px;top:9px;letter-spacing:0.087px">Abrir</div>
<div class="t" style="left:141.46px;top:44px;letter-spacing:-0.166px">Este equipo</div>
<div class="t" style="left:225.66px;top:44px;letter-spacing:0.139px">Documentos</div>
<div class="t" style="left:766.76px;top:44px;letter-spacing:-0.127px;color:#6d6d6d">Buscar en Documentos</div>
<div class="t" style="left:14.04px;top:81px;letter-spacing:-0.193px;color:#1b2b78">Organizar</div>
<div class="t" style="left:108.46px;top:81px;letter-spacing:-0.135px;color:#1b2b78">Nueva carpeta</div>
<div class="t" style="left:41.10px;top:125px;letter-spacing:-0.080px">Acceso rápido</div>
<div class="t" style="left:48.26px;top:149px;letter-spacing:-0.010px">Escritorio</div>
<div class="t" style="left:48.26px;top:173px;letter-spacing:-0.418px">Descargas</div>
<div class="t" style="left:48.26px;top:197px;letter-spacing:0.194px">Documentos</div>
<div class="t" style="left:48.14px;top:221px;letter-spacing:-0.123px">Imágenes</div>
<div class="t" style="left:48.26px;top:245px;letter-spacing:0.023px">Música</div>
<div class="t" style="left:48.70px;top:269px;letter-spacing:-0.401px">System32</div>
<div class="t" style="left:49.20px;top:293px;letter-spacing:-0.517px">Vídeos</div>
<div class="t" style="left:40.54px;top:325px;letter-spacing:-0.076px">OneDrive</div>
<div class="t" style="left:40.16px;top:357px;letter-spacing:-0.116px">Este equipo</div>
<div class="t" style="left:40.16px;top:389px;letter-spacing:-0.220px">Red</div>
<div class="t" style="left:179.10px;top:170px;letter-spacing:0.011px">AyuttayaBuddha</div>
<div class="t" style="left:177.19px;top:185px;letter-spacing:-0.854px">_ROW1009774830</div>
<div class="t" style="left:189.65px;top:200px;letter-spacing:-0.666px">4_1920x1080</div>
<div class="t" style="left:288.50px;top:170px;letter-spacing:-0.537px">AZDino_ROW105</div>
<div class="t" style="left:288.32px;top:185px;letter-spacing:-0.772px">12287137_1920x1</div>
<div class="t" style="left:323.76px;top:200px;letter-spacing:-0.730px">080</div>
<div class="t" style="left:396.66px;top:170px;letter-spacing:-0.449px">BabySloth_ROW4</div>
<div class="t" style="left:397.44px;top:185px;letter-spacing:-0.690px">643411492_1920x</div>
<div class="t" style="left:429.73px;top:200px;letter-spacing:-0.765px">1080</div>
<div class="t" style="left:508.76px;top:170px;letter-spacing:-0.427px">BadlandsBday_R</div>
<div class="t" style="left:507.14px;top:185px;letter-spacing:-0.710px">OW11053254964_</div>
<div class="t" style="left:525.33px;top:200px;letter-spacing:-0.711px">1920x1080</div>
<div class="t" style="left:617.56px;top:170px;letter-spacing:-0.408px">BadlandsCycle_R</div>
<div class="t" style="left:617.04px;top:185px;letter-spacing:-0.771px">OW12605400863_</div>
<div class="t" style="left:635.12px;top:200px;letter-spacing:-0.699px">1920x1080</div>
<div class="t" style="left:727.66px;top:170px;letter-spacing:-0.390px">BanffEvergreens_</div>
<div class="t" style="left:728.46px;top:185px;letter-spacing:-0.728px">ROW1324892555</div>
<div class="t" style="left:739.64px;top:200px;letter-spacing:-0.695px">6_1920x1080</div>
<div class="t" style="left:837.26px;top:170px;letter-spacing:-0.528px">BaobabGrove_RO</div>
<div class="t" style="left:838.70px;top:185px;letter-spacing:-0.718px">W8591488440_19</div>
<div class="t" style="left:861.54px;top:200px;letter-spacing:-0.693px">20x1080</div>
<div class="t" style="left:177.24px;top:317px;letter-spacing:-0.322px">Como_iniciar_ses</div>
<div class="t" style="left:177.05px;top:332px;letter-spacing:0.015px">ion_como_admin</div>
<div class="t" style="left:177.75px;top:347px;letter-spacing:-0.127px">istrador_en_wind</div>
<div class="t" style="left:203.90px;top:362px;letter-spacing:-0.607px">ows_10</div>
<div class="t" style="left:307.05px;top:317px;letter-spacing:-0.372px">image001</div>
<div class="t" style="left:401.70px;top:317px;letter-spacing:-0.150px">Solvetic (Large)</div>
<div class="t" style="left:528.10px;top:317px;letter-spacing:-0.331px">Solvetic 1</div>
<div class="t" style="left:641.70px;top:317px;letter-spacing:-0.144px">Solvetic</div>
<div class="t" style="left:751.90px;top:317px;letter-spacing:-0.186px">Solvetic</div>
<div class="t" style="left:858.60px;top:317px;letter-spacing:-0.080px">Solvetic2</div>
<div class="t" style="left:125.76px;top:470px;letter-spacing:0.301px">Nombre:</div>
<div class="t" style="left:181.70px;top:471px;letter-spacing:-0.144px">Solvetic</div>
<div class="t" style="left:739.35px;top:470px;letter-spacing:-0.188px">Todos los archivos</div>
<div class="t" style="left:766.30px;top:500px;letter-spacing:0.112px">Abrir</div>
<div class="t" style="left:855.84px;top:500px;letter-spacing:-0.111px">Cancelar</div>
<!-- watermark -->
<svg style="left:876.3px;top:473px;z-index:20" width="52" height="52" viewBox="-26 -26 52 52">
<circle r="25.6" fill="#fff" fill-opacity="0.66" stroke="#cfcfcf" stroke-opacity=".55" stroke-width="0.8"/>
<path d="M-0.3 6.9C-6 4 -12 3 -15.4 -1.6C-19 -7 -17.5 -14 -12 -18.5C-6 -23 4 -23.5 9 -19C14 -14.5 11 -8 9 -2C8 1 7.3 4 8.7 6.9C4 9 1 11 0.9 13.5C4 15 10 10.5 14.2 12.3C15 15 8 18 3.9 20" stroke="#4a8ed2" stroke-width="1.7" fill="none" stroke-linecap="round" stroke-linejoin="round"/>
</svg>
</body>
</html>
